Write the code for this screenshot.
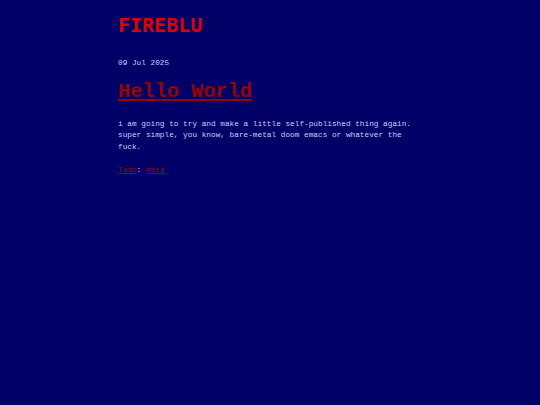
export default function App() {
  return (
    <div className="min-h-[405px] w-full bg-[#000066] font-['Liberation_Mono',monospace]">
      <div className="mx-auto w-[304px] pt-[13px]">
        <div className="font-['DejaVu_Sans_Mono',monospace] text-[20px] font-bold leading-[24px] text-[#dd0000]">FIREBLU</div>
        <div className="mt-[21px] text-[7.75px] leading-[11.5px] text-[#ccccff]">09 Jul 2025</div>
        <h1 className="mt-[10px] text-[20.3px] font-bold leading-[24px] text-[#990000] underline decoration-2 underline-offset-[2px]">Hello World</h1>
        <p className="mt-[15px] text-[7.75px] leading-[11.5px] text-[#ccccff]">
          i am going to try and make a little self-published thing again. super simple, you know, bare-metal doom emacs or whatever the fuck.
        </p>
        <p className="mt-[12px] text-[7.75px] leading-[11.5px] text-[#ccccff]">
          <a className="text-[#990000] underline">Tags</a>: <a className="text-[#990000] underline">meta</a>
        </p>
      </div>
    </div>
  );
}
